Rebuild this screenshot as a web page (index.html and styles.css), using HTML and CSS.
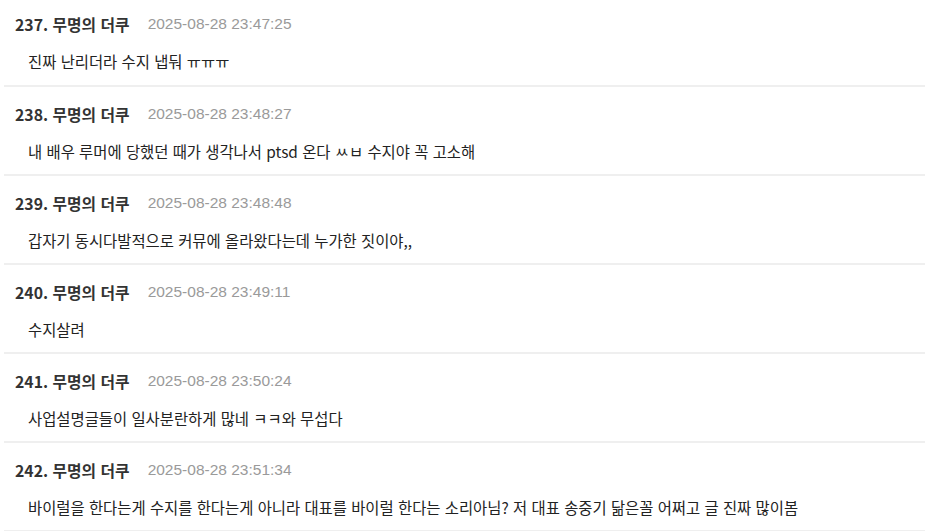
FILE: index.html
```html
<!DOCTYPE html>
<html lang="ko">
<head>
<meta charset="utf-8">
<link rel="stylesheet" href="styles.css">
</head>
<body>
<ul class="comments">
  <li class="comment">
    <div class="meta"><span class="author">237. 무명의 더쿠</span><span class="date">2025-08-28 23:47:25</span></div>
    <p class="text">진짜 난리더라 수지 냅둬 ㅠㅠㅠ</p>
  </li>
  <li class="comment">
    <div class="meta"><span class="author">238. 무명의 더쿠</span><span class="date">2025-08-28 23:48:27</span></div>
    <p class="text">내 배우 루머에 당했던 때가 생각나서 ptsd 온다 ㅆㅂ 수지야 꼭 고소해</p>
  </li>
  <li class="comment">
    <div class="meta"><span class="author">239. 무명의 더쿠</span><span class="date">2025-08-28 23:48:48</span></div>
    <p class="text">갑자기 동시다발적으로 커뮤에 올라왔다는데 누가한 짓이야,,</p>
  </li>
  <li class="comment">
    <div class="meta"><span class="author">240. 무명의 더쿠</span><span class="date">2025-08-28 23:49:11</span></div>
    <p class="text">수지살려</p>
  </li>
  <li class="comment">
    <div class="meta"><span class="author">241. 무명의 더쿠</span><span class="date">2025-08-28 23:50:24</span></div>
    <p class="text">사업설명글들이 일사분란하게 많네 ㅋㅋ와 무섭다</p>
  </li>
  <li class="comment">
    <div class="meta"><span class="author">242. 무명의 더쿠</span><span class="date">2025-08-28 23:51:34</span></div>
    <p class="text">바이럴을 한다는게 수지를 한다는게 아니라 대표를 바이럴 한다는 소리아님? 저 대표 송중기 닮은꼴 어쩌고 글 진짜 많이봄</p>
  </li>
</ul>
</body>
</html>
```
FILE: styles.css
```css
html, body {
  margin: 0;
  padding: 0;
  background: #ffffff;
}
body {
  font-family: "Noto Sans CJK KR", "Noto Sans", "Liberation Sans", sans-serif;
  color: #222;
  overflow: hidden;
}
.comments {
  list-style: none;
  margin: 0;
  padding: 0 0 0 4px;
}
.comment {
  box-sizing: border-box;
  height: 89px;
  padding: 17px 0 0 0;
  border-bottom: 2px solid #efefef;
}
.comment:first-child {
  padding-top: 14px;
  height: 87px;
}
.meta {
  display: flex;
  align-items: center;
  gap: 18px;
  height: 20px;
  padding-left: 11px;
}
.author {
  font-size: 15.8px;
  font-weight: 700;
  color: #333;
}
.date {
  font-family: "Liberation Sans", "Noto Sans", sans-serif;
  font-size: 15.5px;
  color: #9a9a9a;
}
.text {
  margin: 17px 0 0 0;
  padding-left: 24px;
  height: 20px;
  line-height: 20px;
  font-size: 15.4px;
  color: #222;
  white-space: nowrap;
}
```
